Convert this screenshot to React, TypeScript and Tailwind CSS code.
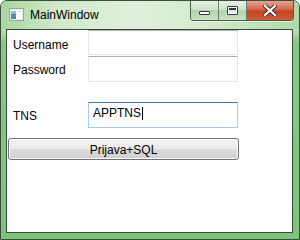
import React from 'react';

const font = {fontFamily: '"Liberation Sans", Arial, sans-serif'};

function AppIcon() {
  return (
    <svg width="15" height="13" viewBox="0 0 15 13" className="block">
      <rect x="0.5" y="0.5" width="14" height="12" fill="#e8ece8" stroke="#9aa49a" />
      <rect x="2" y="2" width="11" height="9" fill="#ffffff" />
      <rect x="2" y="3" width="5" height="8" fill="#4b8fa6" />
      <rect x="2" y="3" width="5" height="3" fill="#8fc0cf" />
      <rect x="9" y="3" width="3" height="1" fill="#c8d0d8" />
    </svg>
  );
}

function CaptionButtons() {
  return (
    <div className="flex h-[20px] overflow-hidden rounded-b-[4px] border border-t-0 border-[#4b5a4b] shadow-[0_1px_0_rgba(255,255,255,0.6)]">
      <div className="flex w-[28px] items-end justify-center border-r border-[#6d7d6d] bg-[linear-gradient(180deg,#e6f1e3_0%,#cfe4ca_45%,#b2d2ac_50%,#c8e1c2_100%)] pb-[5px]">
        <div className="h-[4px] w-[11px] rounded-[1px] border border-[#2f3a46] bg-white" />
      </div>
      <div className="flex w-[28px] items-center justify-center border-r border-[#6d7d6d] bg-[linear-gradient(180deg,#e6f1e3_0%,#cfe4ca_45%,#b2d2ac_50%,#c8e1c2_100%)]">
        <div className="h-[9px] w-[11px] rounded-[1px] border border-[#2f3a46] bg-white p-[1px]">
          <div className="h-full w-full border-t-[2px] border-[#2f3a46] bg-[#e0e6ea]" />
        </div>
      </div>
      <div className="flex w-[46px] items-center justify-center bg-[linear-gradient(180deg,#e3a493_0%,#d86e52_40%,#c4441f_55%,#cc5d3c_100%)]">
        <svg width="14" height="11" viewBox="0 0 14 11">
          <path
            d="M2 1 L7 5.5 L12 1 M2 10 L7 5.5 L12 10"
            stroke="#3a2a2a"
            strokeWidth="4"
            strokeLinecap="square"
            fill="none"
          />
          <path
            d="M2 1 L7 5.5 L12 1 M2 10 L7 5.5 L12 10"
            stroke="#ffffff"
            strokeWidth="2.2"
            strokeLinecap="square"
            fill="none"
          />
        </svg>
      </div>
    </div>
  );
}

function TextBox({h, focused, children}: {h: string; focused?: boolean; children?: React.ReactNode}) {
  return (
    <div
      className={
        focused
          ? `${h} w-[150px] border border-[#a7cbe6] border-t-[#3d7bad] bg-white`
          : `${h} w-[150px] border border-[#e2e3ea] border-t-[#abadb3] bg-white`
      }
    >
      {children}
    </div>
  );
}

export default function App() {
  return (
    <div className="h-[240px] w-[300px] bg-white" style={font}>
      <div className="flex h-[240px] w-[300px] flex-col overflow-hidden rounded-t-[7px] border border-[#3d4d3d] bg-[linear-gradient(180deg,#c6e3bf_0px,#d2eacc_18px,#bfe0b8_28px,#86c984_42px,#7cc47b_100%)]">
        <div className="flex h-[28px] items-start bg-[linear-gradient(90deg,#a9d6a0_0%,#cfe8c9_18%,#e0f0dc_45%,#d2eacc_70%,#b0d9a8_100%)]">
          <div className="ml-[8px] mt-[7px]">
            <AppIcon />
          </div>
          <span className="ml-[6px] mt-[7px] text-[12px] leading-[15px] text-black">MainWindow</span>
          <div className="ml-auto mr-[5px]">
            <CaptionButtons />
          </div>
        </div>
        <div className="mb-[6px] ml-[5px] mr-[6px] flex-1 border border-[#3a4a3a] bg-white text-[12px] leading-[15px] text-black">
          <div className="flex">
            <div className="w-[81px] pl-[6px] pt-[8px]">Username</div>
            <TextBox h="h-[25px]" />
          </div>
          <div className="mt-[1px] flex">
            <div className="w-[81px] pl-[6px] pt-[7px]">Password</div>
            <TextBox h="h-[26px]" />
          </div>
          <div className="mt-[20px] flex">
            <div className="w-[81px] pl-[6px] pt-[7px]">TNS</div>
            <TextBox h="h-[26px]" focused>
              <div className="flex items-start pl-[4px] pt-[3px]">
                <span>APPTNS</span>
                <span className="ml-[1px] mt-[1px] h-[13px] w-[1px] bg-black" />
              </div>
            </TextBox>
          </div>
          <button className="ml-[1px] mt-[10px] flex h-[22px] w-[231px] items-center justify-center rounded-[3px] border border-[#707070] bg-[linear-gradient(180deg,#f2f2f2_0%,#ebebeb_50%,#dddddd_50%,#cfcfcf_100%)] pt-[2px] text-[12px] leading-[15px] text-black shadow-[inset_0_0_0_1px_#fcfcfc]">
            Prijava+SQL
          </button>
        </div>
      </div>
    </div>
  );
}
